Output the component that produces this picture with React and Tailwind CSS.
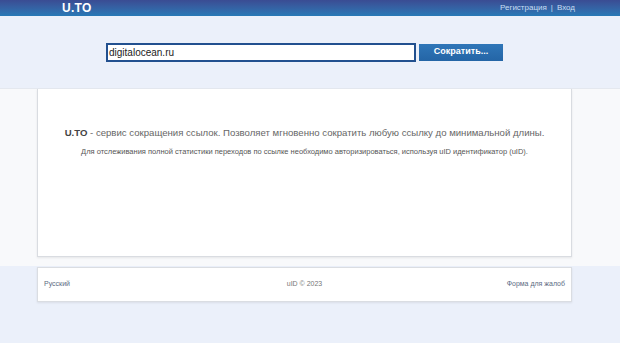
export default function App() {
  const font = { fontFamily: '"Liberation Sans", "DejaVu Sans", sans-serif' };
  return (
    <div className="w-[620px] h-[343px] flex flex-col bg-[#ebf0fa] overflow-hidden" style={font}>
      <header className="h-[16px] bg-gradient-to-b from-[#3a4c93] to-[#2779b6] flex items-center justify-between pl-[62px] pr-[45px]">
        <span className="text-white font-bold text-[12px] leading-none tracking-[0.3px]">U.TO</span>
        <div className="text-[8px] text-[#c9dcf2] leading-none flex gap-[4px]">
          <span>Регистрация</span>
          <span>|</span>
          <span>Вход</span>
        </div>
      </header>
      <div className="h-[72px] flex items-center gap-[3px] pl-[106px]">
        <div className="w-[310px] h-[19px] border-2 border-[#22508f] bg-white flex items-center px-[1px] text-[10px] text-[#222]">
          digitalocean.ru
        </div>
        <button className="w-[84px] h-[17px] bg-gradient-to-b from-[#2f76b8] to-[#2465a6] text-white text-[9px] font-bold flex items-center justify-center">
          Сократить...
        </button>
      </div>
      <div className="h-[178px] bg-[#f8f9fb] border-t border-[#e4e8ef] pl-[37px]">
        <div className="w-[535px] h-[168px] bg-white border-x border-b border-[#d9dce1] shadow-[0_1px_2px_rgba(0,0,0,0.08)] flex flex-col items-center pt-[39px]">
          <p className="text-[9.6px] text-[#666] leading-none">
            <span className="font-bold text-[#444]">U.TO</span> - сервис сокращения ссылок. Позволяет мгновенно сократить любую ссылку до минимальной длины.
          </p>
          <p className="mt-[10px] text-[7.5px] text-[#555] leading-none">
            Для отслеживания полной статистики переходов по ссылке необходимо авторизироваться, используя uID идентификатор (uID).
          </p>
        </div>
      </div>
      <div className="pl-[37px] pt-[1px]">
        <div className="w-[535px] h-[35px] bg-white border border-[#dadde2] shadow-[0_1px_2px_rgba(0,0,0,0.08)] grid grid-cols-3 items-center px-[6px] text-[7px] text-[#5b6b82]">
          <span>Русский</span>
          <span className="text-center text-[#777]">uID © 2023</span>
          <span className="text-right">Форма для жалоб</span>
        </div>
      </div>
    </div>
  );
}
